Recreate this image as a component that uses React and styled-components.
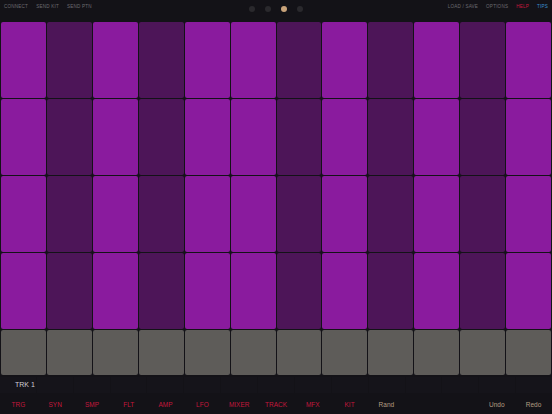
import React from 'react';
import styled, { createGlobalStyle } from 'styled-components';

const Global = createGlobalStyle`
  html, body {
    margin: 0;
    padding: 0;
    background: #131217;
    font-family: "Liberation Sans", Arial, sans-serif;
  }
`;

const Page = styled.div`
  width: 552px;
  height: 414px;
  display: flex;
  flex-direction: column;
  overflow: hidden;
  background: #131217;
`;

const TopBar = styled.div`
  height: 22px;
  display: grid;
  grid-template-columns: 1fr auto 1fr;
  align-items: start;
  padding: 0 4px;
`;

const MenuGroup = styled.div`
  display: flex;
  gap: ${(p) => p.gap || 10}px;
  justify-content: ${(p) => (p.right ? 'flex-end' : 'flex-start')};
  padding-top: 4px;
`;

const MenuItem = styled.span`
  font-size: 4.6px;
  letter-spacing: 0.2px;
  color: ${(p) => p.color || '#6c6a70'};
  text-transform: uppercase;
`;

const Dots = styled.div`
  display: flex;
  gap: 10px;
  padding-top: 6px;
`;

const Dot = styled.span`
  width: 6px;
  height: 6px;
  border-radius: 50%;
  background: ${(p) => (p.active ? '#c9a37a' : '#2a292d')};
`;

const Grid = styled.div`
  display: grid;
  grid-template-columns: repeat(12, 1fr);
  grid-template-rows: repeat(4, 76px) 45px;
  gap: 1px;
  padding: 0 1px;
  background: #131217;
`;

const Pad = styled.div`
  border-radius: 2px;
  background: ${(p) => (p.gray ? '#5e5c59' : p.on ? '#8a1b9e' : '#4d1558')};
`;

const TrackRow = styled.div`
  height: 19px;
  display: grid;
  grid-template-columns: repeat(15, 1fr);
  gap: 1px;
  align-items: center;
`;

const TrackCell = styled.div`
  height: 16px;
  display: flex;
  align-items: center;
  padding-left: ${(p) => (p.label ? 15 : 0)}px;
  font-size: 7px;
  color: #d0cfd4;
  background: #15141a;
  white-space: nowrap;
`;

const TabRow = styled.div`
  height: 20px;
  display: grid;
  grid-template-columns: repeat(15, 1fr);
  align-items: center;
`;

const Tab = styled.div`
  text-align: center;
  font-size: 6.5px;
  color: ${(p) => (p.action ? '#b39d82' : '#c4173c')};
`;

const onCols = [true, false, true, false, true, true, false, true, false, true, false, true];

const tabs = [
  ['TRG'], ['SYN'], ['SMP'], ['FLT'], ['AMP'], ['LFO'], ['MIXER'], ['TRACK'], ['MFX'], ['KIT'],
  ['Rand', true], ['', true], ['', true], ['Undo', true], ['Redo', true],
];

export default function App() {
  const rows = [0, 1, 2, 3, 4];
  return (
    <Page>
      <Global />
      <TopBar>
        <MenuGroup gap={8}>
          <MenuItem>Connect</MenuItem>
          <MenuItem>Send Kit</MenuItem>
          <MenuItem>Send Ptn</MenuItem>
        </MenuGroup>
        <Dots>
          <Dot />
          <Dot />
          <Dot active />
          <Dot />
        </Dots>
        <MenuGroup right gap={8}>
          <MenuItem>Load / Save</MenuItem>
          <MenuItem>Options</MenuItem>
          <MenuItem color="#c4173c">Help</MenuItem>
          <MenuItem color="#3a8fd0">Tips</MenuItem>
        </MenuGroup>
      </TopBar>
      <Grid>
        {rows.map((r) =>
          onCols.map((on, c) => <Pad key={r + '-' + c} on={on} gray={r === 4} />)
        )}
      </Grid>
      <TrackRow>
        {Array.from({ length: 15 }).map((_, i) => (
          <TrackCell key={i} label={i === 0}>{i === 0 ? 'TRK 1' : ''}</TrackCell>
        ))}
      </TrackRow>
      <TabRow>
        {tabs.map(([label, action], i) => (
          <Tab key={i} action={action}>{label}</Tab>
        ))}
      </TabRow>
    </Page>
  );
}
